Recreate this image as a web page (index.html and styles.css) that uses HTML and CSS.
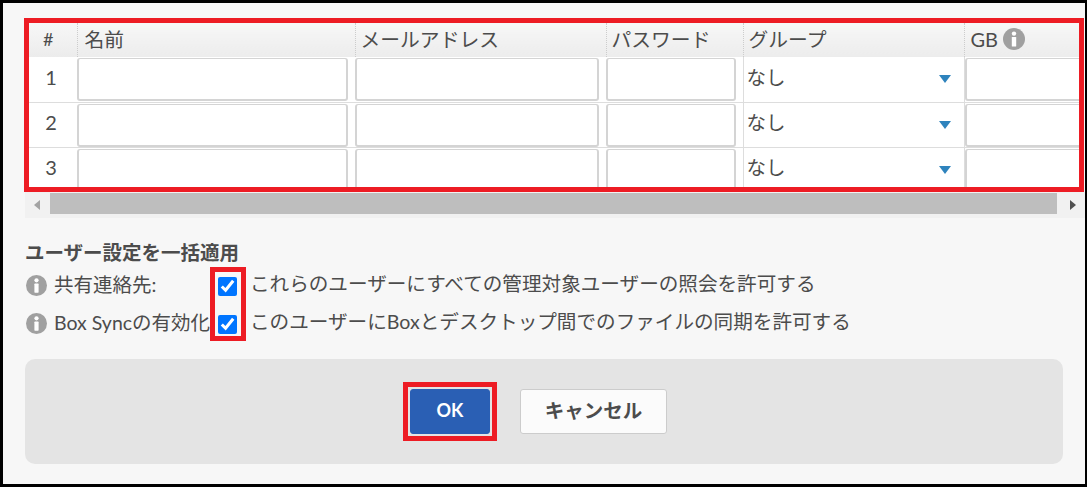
FILE: index.html
```html
<!DOCTYPE html>
<html lang="ja">
<head>
    <meta charset="UTF-8">
    <title>ユーザーを追加</title>
    <link rel="stylesheet" href="styles.css">
</head>
<body>

    <div class="frame">
        <div class="table-box">
            <table class="user-table">
                <colgroup>
                    <col class="col-num">
                    <col class="col-name">
                    <col class="col-mail">
                    <col class="col-pass">
                    <col class="col-group">
                    <col class="col-gb">
                </colgroup>
                <thead>
                    <tr>
                        <th class="num-head">#</th>
                        <th class="name-head">名前</th>
                        <th>メールアドレス</th>
                        <th>パスワード</th>
                        <th>グループ</th>
                        <th>
                            <span class="gb-head">GB
                                <svg class="info" viewBox="0 0 22 22"><circle cx="11" cy="11" r="11"/><circle class="info-i" cx="11" cy="5.6" r="2.2"/><rect class="info-i" x="8.8" y="9" width="4.4" height="9.5" rx="0.6"/></svg>
                            </span>
                        </th>
                    </tr>
                </thead>
                <tbody>
                    <tr>
                        <td class="num">1</td>
                        <td><input type="text"></td>
                        <td><input type="text"></td>
                        <td><input type="text"></td>
                        <td class="group-cell"><div class="group-select">なし</div></td>
                        <td class="gb-cell"><input type="text"></td>
                    </tr>
                    <tr>
                        <td class="num">2</td>
                        <td><input type="text"></td>
                        <td><input type="text"></td>
                        <td><input type="text"></td>
                        <td class="group-cell"><div class="group-select">なし</div></td>
                        <td class="gb-cell"><input type="text"></td>
                    </tr>
                    <tr>
                        <td class="num">3</td>
                        <td><input type="text"></td>
                        <td><input type="text"></td>
                        <td><input type="text"></td>
                        <td class="group-cell"><div class="group-select">なし</div></td>
                        <td class="gb-cell"><input type="text"></td>
                    </tr>
                </tbody>
            </table>
        </div>

        <div class="scrollbar">
            <span class="arrow-left"></span>
            <div class="thumb"></div>
            <span class="arrow-right"></span>
        </div>

        <div class="settings">
            <h2>ユーザー設定を一括適用</h2>
            <div class="setting-row">
                <svg class="info" viewBox="0 0 22 22"><circle cx="11" cy="11" r="11"/><circle class="info-i" cx="11" cy="5.6" r="2.2"/><rect class="info-i" x="8.8" y="9" width="4.4" height="9.5" rx="0.6"/></svg>
                <span class="setting-name">共有連絡先:</span>
                <input type="checkbox" checked>
                <span class="setting-text">これらのユーザーにすべての管理対象ユーザーの照会を許可する</span>
            </div>
            <div class="setting-row">
                <svg class="info" viewBox="0 0 22 22"><circle cx="11" cy="11" r="11"/><circle class="info-i" cx="11" cy="5.6" r="2.2"/><rect class="info-i" x="8.8" y="9" width="4.4" height="9.5" rx="0.6"/></svg>
                <span class="setting-name">Box Syncの有効化</span>
                <input type="checkbox" checked>
                <span class="setting-text">このユーザーにBoxとデスクトップ間でのファイルの同期を許可する</span>
            </div>
            <div class="check-mark"></div>
        </div>

        <div class="footer">
            <div class="ok-mark">
                <button class="btn btn-ok">OK</button>
            </div>
            <button class="btn btn-cancel">キャンセル</button>
        </div>
    </div>

</body>
</html>
```

FILE: styles.css
```css
* {
    box-sizing: border-box;
}

html, body {
    margin: 0;
    padding: 0;
}

body {
    font-family: Lato, "Noto Sans CJK JP", sans-serif;
    font-size: 19.5px;
    color: #4c4c4c;
}

.frame {
    width: 1087px;
    height: 487px;
    padding: 15px 0 0 21px;
    border: 3px solid #000;
    border-right-width: 2px;
    background-color: #f7f7f7;
    overflow: hidden;
}

.table-box {
    width: 1060px;
    height: 174px;
    border: 5px solid #ed1c24;
    overflow: hidden;
}

.user-table {
    width: 1250px;
    table-layout: fixed;
    border-collapse: collapse;
    background-color: #fff;
}

.col-num { width: 48px; }
.col-name { width: 278px; }
.col-mail { width: 251px; }
.col-pass { width: 137px; }
.col-group { width: 221px; }
.col-gb { width: 315px; }

th {
    height: 34px;
    padding: 0 0 3px 5px;
    border-left: 1px dotted #ccc;
    background: linear-gradient(#f7f7f7, #ececec);
    font-size: 19.8px;
    font-weight: normal;
    text-align: left;
    line-height: 28px;
    white-space: nowrap;
}

th.num-head {
    border-left: none;
    padding: 0 9px 3px 0;
    font-size: 18px;
    text-align: center;
}

th.name-head {
    padding-left: 7px;
}

.gb-head {
    display: flex;
    align-items: center;
    gap: 5px;
    padding-left: 1px;
    font-size: 20px;
}

.gb-head .info {
    width: 22px;
    height: 22px;
}

td {
    height: 45px;
    padding: 1px 7px 0 0;
    border-bottom: 1px solid #ddd;
}

td.num {
    padding: 0 4px 5px 0;
    font-size: 20px;
    text-align: center;
}

td input {
    display: block;
    width: 100%;
    height: 43px;
    border: 2px solid #d4d4d4;
    border-top-width: 1px;
    border-radius: 3px;
    background-color: #fff;
}

.group-cell {
    padding: 0 0 0 3px;
    border-left: 1px solid #ddd;
    border-right: 1px solid #ddd;
}

.group-select {
    display: flex;
    align-items: center;
    justify-content: space-between;
    padding: 0 13px 6px 0;
}

.group-select::after {
    content: "";
    margin-top: 6px;
    border-left: 6px solid transparent;
    border-right: 6px solid transparent;
    border-top: 8px solid #2e83bd;
}

.scrollbar {
    display: flex;
    align-items: center;
    width: 1062px;
    height: 26px;
    padding: 1px 0 1px 0;
    margin-left: 1px;
    background-color: #f1f1f1;
}

.arrow-left {
    width: 25px;
    padding-left: 9px;
}

.arrow-left::before {
    content: "";
    display: block;
    width: 0;
    border-top: 5px solid transparent;
    border-bottom: 5px solid transparent;
    border-right: 6px solid #a3a3a3;
}

.thumb {
    width: 1007px;
    height: 21px;
    margin-top: -3px;
    background-color: #bebebe;
}

.arrow-right {
    padding-left: 13px;
}

.arrow-right::before {
    content: "";
    display: block;
    width: 0;
    border-top: 5px solid transparent;
    border-bottom: 5px solid transparent;
    border-left: 6px solid #505050;
}

.settings {
    position: relative;
    margin-top: 21px;
    height: 120px;
}

h2 {
    margin: 0 0 0 1px;
    font-size: 19.5px;
    line-height: 28px;
    font-weight: bold;
}

.info {
    display: block;
    flex: none;
    width: 21px;
    height: 21px;
    fill: #a0a0a0;
}

.info-i {
    fill: #fff;
}

.setting-row {
    display: flex;
    align-items: center;
    height: 38px;
    padding-left: 2px;
    white-space: nowrap;
}

.setting-name {
    width: 164px;
    margin-left: 7px;
    padding-bottom: 6px;
}

.setting-text {
    padding-bottom: 8px;
    font-size: 19.6px;
}

.setting-row .info {
    margin-top: -2px;
}

.setting-row input {
    width: 19px;
    height: 19px;
    margin: 0 13px 0 0;
    accent-color: #0075ff;
}

/* red highlight box over the two checkboxes */
.check-mark {
    position: absolute;
    left: 186px;
    top: 28px;
    width: 36px;
    height: 74px;
    border: 5px solid #ed1c24;
}

.footer {
    display: flex;
    align-items: center;
    justify-content: center;
    gap: 23px;
    width: 1038px;
    height: 105px;
    margin-left: 1px;
    padding-right: 18px;
    border-radius: 10px;
    background-color: #e4e4e4;
}

/* red highlight box around the OK button */
.ok-mark {
    padding: 2px;
    border: 5px solid #ed1c24;
}

.btn {
    display: block;
    height: 45px;
    padding: 0 0 4px;
    border-radius: 3px;
    font-family: inherit;
    font-weight: bold;
    font-size: 19.5px;
}

.btn-ok {
    width: 80px;
    border: 1px solid #2a5fb4;
    background-color: #2a5fb4;
    color: #fff;
    font-size: 18px;
}

.btn-cancel {
    width: 147px;
    border: 1px solid #ccc;
    background-color: #fbfbfb;
    color: #4c4c4c;
}
```
